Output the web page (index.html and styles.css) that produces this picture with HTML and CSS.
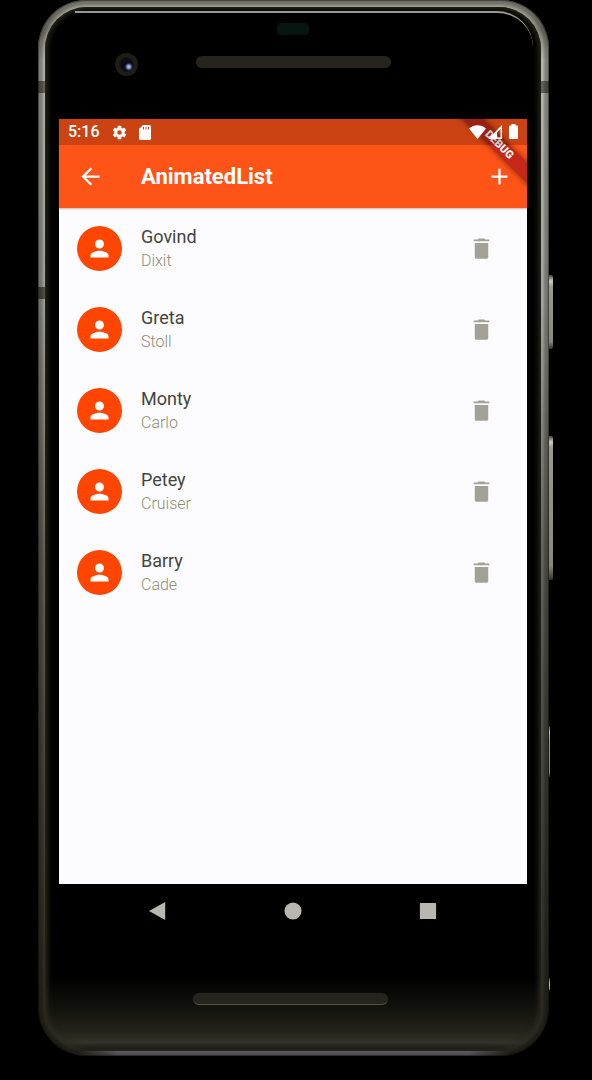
FILE: index.html
```html
<!DOCTYPE html>
<html lang="en">
<head>
<meta charset="utf-8">
<meta name="viewport" content="width=device-width, initial-scale=1">
<title>AnimatedList</title>
<link rel="stylesheet" href="styles.css">
</head>
<body>
<svg class="symbols" aria-hidden="true">
  <symbol id="person" viewBox="0 0 24 24"><path d="M12 12c2.21 0 4-1.79 4-4s-1.790-4-4-4-4 1.790-4 4 1.790 4 4 4zm0 2c-2.670 0-8 1.340-8 4v2h16v-2c0-2.660-5.330-4-8-4z"/></symbol>
  <symbol id="trash" viewBox="0 0 24 24"><path d="M6 19.500c0 .8.500 1.500 1.300 1.500h9.400c.8 0 1.300-.7 1.300-1.500V7H6v12.500zM19 4h-3.500l-1-1h-5l-1 1H5v1.500h14V4z"/></symbol>
</svg>
<div class="phone">
  <span class="key key-power"></span>
  <span class="key key-volume"></span>
  <span class="key key-lower"></span>
  <span class="key key-foot"></span>
  <div class="face">
    <div class="forehead">
      <span class="sensor"></span>
      <span class="camera"></span>
      <span class="speaker"></span>
    </div>
    <main class="screen">
      <div class="top">
        <div class="banner-clip"><span class="banner">DEBUG</span></div>
        <div class="status">
          <span class="time">5:16</span>
          <svg class="gear" viewBox="0 0 24 24"><path d="M19.140 12.940c.04-.3.060-.61.060-.94 0-.32-.02-.64-.07-.94l2.030-1.580a.49.490 0 0 0 .12-.61l-1.920-3.320a.488.488 0 0 0-.59-.22l-2.390.96c-.5-.38-1.030-.7-1.620-.94l-.36-2.540a.484.484 0 0 0-.48-.41h-3.840c-.24 0-.43.17-.47.41l-.36 2.540c-.59.24-1.130.57-1.620.94l-2.390-.96a.48.480 0 0 0-.59.22L2.740 8.870a.47.470 0 0 0 .12.610l2.030 1.580c-.05.3-.09.63-.09.94s.02.640.07.940l-2.030 1.580a.49.490 0 0 0-.12.610l1.920 3.320c.12.220.370.290.590.220l2.390-.96c.5.380 1.030.700 1.620.940l.36 2.540c.05.240.240.410.480.410h3.840c.24 0 .44-.17.470-.41l.36-2.540c.59-.24 1.130-.56 1.620-.94l2.390.96c.22.080.470 0 .59-.22l1.920-3.320a.47.470 0 0 0-.12-.61l-2.010-1.580zM12 15.200A3.200 3.200 0 1 1 12 8.800a3.200 3.200 0 0 1 0 6.400z"/></svg>
          <svg class="card" viewBox="0 0 12 15"><path fill-rule="evenodd" d="M4 0h6.500A1.500 1.500 0 0 1 12 1.500v12a1.500 1.500 0 0 1-1.500 1.500h-9A1.500 1.500 0 0 1 0 13.500V4zM4 2v2.500h1V2zm2.500 0v2.500h1V2zM9 2v2.500h1V2z"/></svg>
          <svg class="signals" viewBox="0 0 50 16"><path d="M0 4.500C4.500 0 12.500 0 17 4.500L8.500 15z"/><path fill-rule="evenodd" d="M33 1v14H19zM31.500 5v8.500H28V8.500z"/><path d="M42.500 1.500V0h4v1.500H48c.6 0 1 .4 1 1V14c0 .6-.4 1-1 1h-7c-.6 0-1-.4-1-1V2.500c0-.6.4-1 1-1z"/></svg>
        </div>
        <header class="appbar">
          <button class="tool" aria-label="Back"><svg viewBox="0 0 24 24"><path d="M20 11H7.830l5.590-5.590L12 4l-8 8 8 8 1.410-1.410L7.830 13H20v-2z"/></svg></button>
          <h1>AnimatedList</h1>
          <button class="tool" aria-label="Add"><svg viewBox="0 0 24 24"><path d="M19 13h-6v6h-2v-6H5v-2h6V5h2v6h6v2z"/></svg></button>
        </header>
      </div>
      <ul class="list">
        <li class="row"><span class="avatar"><svg viewBox="0 0 24 24"><use href="#person"/></svg></span><span class="name"><span class="first">Govind</span><span class="last">Dixit</span></span><button class="tool delete" aria-label="Delete Govind"><svg viewBox="0 0 24 24"><use href="#trash"/></svg></button></li>
        <li class="row"><span class="avatar"><svg viewBox="0 0 24 24"><use href="#person"/></svg></span><span class="name"><span class="first">Greta</span><span class="last">Stoll</span></span><button class="tool delete" aria-label="Delete Greta"><svg viewBox="0 0 24 24"><use href="#trash"/></svg></button></li>
        <li class="row"><span class="avatar"><svg viewBox="0 0 24 24"><use href="#person"/></svg></span><span class="name"><span class="first">Monty</span><span class="last">Carlo</span></span><button class="tool delete" aria-label="Delete Monty"><svg viewBox="0 0 24 24"><use href="#trash"/></svg></button></li>
        <li class="row"><span class="avatar"><svg viewBox="0 0 24 24"><use href="#person"/></svg></span><span class="name"><span class="first">Petey</span><span class="last">Cruiser</span></span><button class="tool delete" aria-label="Delete Petey"><svg viewBox="0 0 24 24"><use href="#trash"/></svg></button></li>
        <li class="row"><span class="avatar"><svg viewBox="0 0 24 24"><use href="#person"/></svg></span><span class="name"><span class="first">Barry</span><span class="last">Cade</span></span><button class="tool delete" aria-label="Delete Barry"><svg viewBox="0 0 24 24"><use href="#trash"/></svg></button></li>
      </ul>
    </main>
    <nav class="system">
      <button aria-label="System back"><svg viewBox="0 0 20 20"><path d="M0 10 18 0v20z"/></svg></button>
      <button aria-label="Home"><svg viewBox="0 0 20 20"><circle cx="10" cy="10" r="9.500"/></svg></button>
      <button aria-label="Recent apps"><svg viewBox="0 0 20 20"><rect x="1" y="1" width="18" height="18" rx="1"/></svg></button>
    </nav>
    <div class="chin"><span class="speaker"></span></div>
  </div>
</div>
</body>
</html>
```
FILE: styles.css
```css
* { box-sizing: border-box; }

body {
  margin: 0;
  background: #000;
  font-family: Roboto, "Liberation Sans", sans-serif;
}

button {
  padding: 0;
  border: 0;
  background: none;
  color: inherit;
}

svg { display: block; fill: currentColor; }

.symbols { position: absolute; width: 0; height: 0; }

/* Device body */
.phone {
  position: relative;
  display: flex;
  min-height: 1056px;
  margin: 0 43px 0 38px;
  padding: 7px 8px 5px 7px;
  border-radius: 48px;
  background:
    linear-gradient(#66665c, #66665c) left 0 top 81px / 8px 12px no-repeat,
    linear-gradient(#55554c, #55554c) left 0 top 287px / 8px 12px no-repeat,
    linear-gradient(#66665c, #66665c) right 0 top 81px / 8px 12px no-repeat,
    linear-gradient(90deg, #0000 40px, #77757a 80px calc(100% - 80px), #0000 calc(100% - 40px)) bottom / 100% 5px no-repeat,
    linear-gradient(#aaa99a, #88887c 30px, #bbbbb4 60px, #aaaaa4 300px, #88887c 420px, #66665a 560px, #44443a 800px, #2c2c22 1000px);
}

.phone::before {
  content: "";
  position: absolute;
  inset: 0;
  border-radius: 48px;
  box-shadow: inset 0 0 0 1px #0006, inset 0 0 3px 5px #0005;
}

.key {
  position: absolute;
  left: 100%;
  width: 4px;
  border-radius: 0 2px 2px 0;
  background: linear-gradient(#44443a, #ccccc0 6px, #99998c 12px, #88887c 90%, #33332a);
}

.key-power { top: 275px; height: 74px; }
.key-volume { top: 436px; height: 144px; }
.key-lower { top: 726px; height: 51px; width: 1px; }
.key-foot { top: 978px; height: 12px; width: 1px; }

.face {
  position: relative;
  flex: 1;
  display: flex;
  flex-direction: column;
  padding: 0 14px;
  border-radius: 42px;
  background: linear-gradient(#000 970px, #12120d 1000px, #24241b 1025px, #33332a 1036px, #14140f 1043px);
  box-shadow: inset 2px 0 6px #2c2c22, inset -2px 0 6px #2c2c22;
}

.face::before {
  content: "";
  position: absolute;
  inset: 4px 8px auto 30px;
  height: 40px;
  border-top: 2px solid #99998c;
  border-radius: 0 36px 0 0;
}

.forehead {
  position: relative;
  height: 112px;
  display: grid;
  justify-items: center;
  align-content: start;
  padding-top: 16px;
  gap: 21px;
}

.sensor {
  width: 32px;
  height: 12px;
  border-radius: 4px;
  background: #071610;
}

.camera {
  position: absolute;
  left: 56px;
  top: 46px;
  width: 23px;
  height: 23px;
  border-radius: 50%;
  background: radial-gradient(circle at 60% 60%, #aab8f0 1px, #354270 3px, #0000 4px), radial-gradient(circle, #0c0c12 6px, #1e1e19 8px);
}

.speaker {
  display: block;
  width: 195px;
  height: 12px;
  border-radius: 6px;
  background: #26251d;
}

/* App */
.screen {
  display: flex;
  flex-direction: column;
  min-height: 765px;
  background: #fcfcff;
}

.top {
  position: relative;
  background: #ff5418;
  color: #fff;
  box-shadow: 0 1px 2px #80604070;
}

.banner-clip {
  position: absolute;
  inset: 0;
  overflow: hidden;
}

.banner {
  position: absolute;
  right: -32px;
  top: 19px;
  width: 120px;
  line-height: 14px;
  background: #b71c1ccc;
  box-shadow: 0 0 6px #0008;
  font-size: 11px;
  font-weight: 900;
  text-align: center;
  transform: rotate(45deg);
}

.status {
  position: relative;
  display: flex;
  align-items: center;
  height: 26px;
  padding: 0 8px 0 9px;
  background: #0003;
}

.time { font-size: 16px; font-weight: 500; line-height: 20px; }
.gear { width: 17px; height: 17px; margin-left: 11px; }
.card { width: 12px; height: 15px; margin-left: 11px; }
.signals { width: 50px; height: 16px; margin-left: auto; }

.appbar {
  position: relative;
  display: flex;
  align-items: center;
  height: 63px;
  padding: 0 14px 0 18px;
}

.appbar h1 {
  flex: 1;
  margin: 0 0 0 37px;
  font-size: 22px;
  font-weight: 700;
  line-height: 28px;
}

.tool { flex: none; }
.tool svg { width: 27px; height: 27px; }

.list {
  margin: 0;
  padding: 0;
  list-style: none;
}

.row {
  display: flex;
  align-items: center;
  height: 81px;
  padding: 0 32px 0 18px;
}

.avatar {
  display: grid;
  place-items: center;
  width: 45px;
  height: 45px;
  border-radius: 50%;
  background: #ff4500;
  color: #fff;
}

.avatar svg { width: 27px; height: 27px; }

.name {
  flex: 1;
  display: grid;
  margin-left: 19px;
}

.first { font-size: 18px; line-height: 24px; color: #44443c; }
.last { font-size: 16px; font-weight: 300; line-height: 23px; color: #8e8e74; }
.delete { color: #a2a294; }

/* System navigation and lower bezel */
.system {
  display: flex;
  justify-content: space-around;
  align-items: center;
  height: 54px;
  padding: 0 32px;
  color: #b8b8b0;
}

.system svg { width: 18px; height: 20px; }

.chin {
  display: grid;
  justify-items: center;
  padding: 55px 6px 0 0;
}

.chin .speaker { border-bottom: 1px solid #57563c; }
```
